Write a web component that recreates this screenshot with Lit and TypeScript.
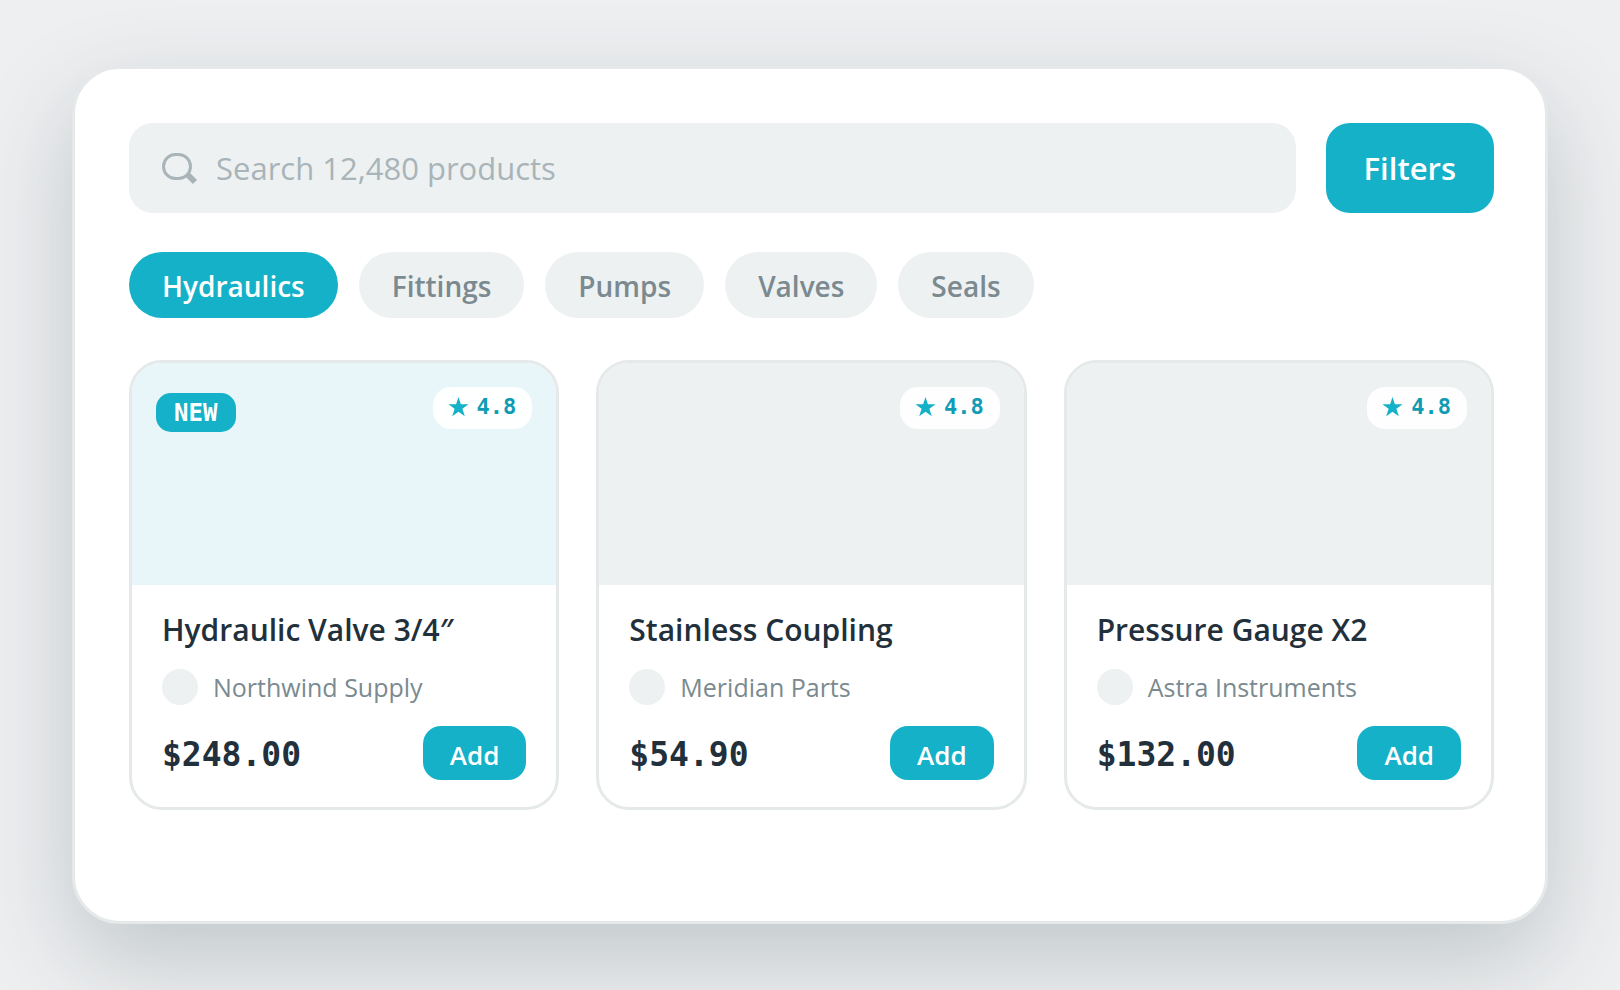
import { LitElement, html, css, svg } from "lit";
import { customElement, property, state } from "lit/decorators.js";
import { classMap } from "lit/directives/class-map.js";

interface Product {
  name: string;
  vendor: string;
  price: string;
  rating: string;
  fresh?: boolean;
}

const CATEGORIES = ["Hydraulics", "Fittings", "Pumps", "Valves", "Seals"];

const PRODUCTS: Product[] = [
  { name: "Hydraulic Valve 3/4″", vendor: "Northwind Supply", price: "$248.00", rating: "4.8", fresh: true },
  { name: "Stainless Coupling", vendor: "Meridian Parts", price: "$54.90", rating: "4.8" },
  { name: "Pressure Gauge X2", vendor: "Astra Instruments", price: "$132.00", rating: "4.8" },
];

const star = svg`<path fill="currentColor" d="M10.5 0 L12.9 7.2 L20.6 7.2 L14.4 11.8 L16.8 19.2 L10.5 14.7 L4.2 19.2 L6.6 11.8 L0.4 7.2 L8.1 7.2 Z"/>`;

@customElement("product-card")
export class ProductCard extends LitElement {
  @property({ attribute: false }) product!: Product;

  static styles = css`
    :host {
      display: block;
      min-width: 0;
    }
    .card {
      border: 3px solid #e5e9e9;
      border-radius: 33px;
      overflow: hidden;
      background: #fff;
    }
    .media {
      position: relative;
      height: 222px;
      background: #edf1f2;
    }
    .media.fresh {
      background: #e8f6fa;
    }
    .new {
      position: absolute;
      top: 30px;
      left: 24px;
      height: 39px;
      padding: 1px 19px 0 18px;
      box-sizing: border-box;
      border-radius: 15px;
      background: #14b1c8;
      color: #fff;
      font: 700 24px/39px "DejaVu Sans Mono", monospace;
    }
    .rating {
      position: absolute;
      top: 24px;
      right: 24px;
      display: flex;
      align-items: center;
      gap: 8px;
      height: 42px;
      padding: 0 16px 3px 15px;
      border-radius: 18px;
      background: rgba(255, 255, 255, 0.92);
      color: #0e9bb3;
      font: 700 22px/39px "DejaVu Sans Mono", monospace;
      box-sizing: border-box;
    }
    .star {
      display: block;
      width: 21px;
      height: 20px;
      color: #14b1c8;
    }
    .body {
      padding: 24px 30px 27px;
    }
    .name {
      margin: 0;
      font-size: 30px;
      line-height: 42px;
      font-weight: 600;
      color: #22303c;
      white-space: nowrap;
    }
    .vendor {
      display: flex;
      align-items: center;
      gap: 15px;
      margin-top: 18px;
      color: #7a8a90;
      font-size: 25px;
      line-height: 36px;
      white-space: nowrap;
    }
    .avatar {
      flex: none;
      width: 36px;
      height: 36px;
      border-radius: 50%;
      background: #edf1f2;
    }
    .buy {
      display: flex;
      align-items: center;
      justify-content: space-between;
      margin-top: 21px;
    }
    .price {
      padding-top: 3px;
      color: #22303c;
      font: 700 33px/51px "DejaVu Sans Mono", monospace;
    }
    .add {
      height: 54px;
      padding: 3px 27px 0;
      border: 0;
      border-radius: 18px;
      background: #14b1c8;
      color: #fff;
      font: 600 26px "Open Sans", "Noto Sans", sans-serif;
      cursor: pointer;
    }
  `;

  render() {
    const p = this.product;
    return html`
      <article class="card">
        <div class=${classMap({ media: true, fresh: !!p.fresh })}>
          ${p.fresh ? html`<span class="new">NEW</span>` : null}
          <span class="rating">
            <svg class="star" viewBox="0 0 21 20" aria-hidden="true">${star}</svg>
            ${p.rating}
          </span>
        </div>
        <div class="body">
          <h2 class="name">${p.name}</h2>
          <div class="vendor"><span class="avatar"></span>${p.vendor}</div>
          <div class="buy">
            <span class="price">${p.price}</span>
            <button class="add" type="button">Add</button>
          </div>
        </div>
      </article>
    `;
  }
}

@customElement("app-root")
export class AppRoot extends LitElement {
  @state() private active = "Hydraulics";

  static styles = css`
    :host {
      display: flex;
      box-sizing: border-box;
      min-height: 100vh;
      padding: 66px 72px;
      background: #eeeff1;
      font-family: "Open Sans", "Noto Sans", sans-serif;
    }
    .panel {
      flex: 1;
      min-width: 0;
      box-sizing: border-box;
      padding: 54px 51px 54px 54px;
      border: 3px solid #e5e9e9;
      border-radius: 48px;
      background: #fff;
      box-shadow: 0 36px 96px rgba(25, 50, 56, 0.21);
    }
    .bar {
      display: flex;
      gap: 30px;
    }
    .search {
      flex: 1;
      min-width: 0;
      display: flex;
      align-items: center;
      gap: 18px;
      height: 90px;
      padding: 0 33px;
      box-sizing: border-box;
      border-radius: 24px;
      background: #edf1f2;
    }
    .glass {
      flex: none;
      width: 36px;
      height: 30px;
      overflow: visible;
      color: #a9b4b9;
    }
    .field {
      flex: 1;
      min-width: 0;
      height: 90px;
      padding: 0;
      border: 0;
      outline: 0;
      background: none;
      color: #22303c;
      font: 400 31px "Open Sans", "Noto Sans", sans-serif;
    }
    .field::placeholder {
      color: #a9b4b9;
      opacity: 1;
    }
    .filters {
      padding: 0 38px;
      border: 0;
      border-radius: 24px;
      background: #14b1c8;
      color: #fff;
      font: 600 31px "Open Sans", "Noto Sans", sans-serif;
      cursor: pointer;
    }
    .chips {
      display: flex;
      flex-wrap: wrap;
      gap: 21px;
      margin-top: 39px;
    }
    .chip {
      height: 66px;
      padding: 2px 33px 0;
      border: 0;
      border-radius: 33px;
      background: #edf1f2;
      color: #7a8a90;
      font: 600 28px "Open Sans", "Noto Sans", sans-serif;
      cursor: pointer;
    }
    .chip.on {
      background: #14b1c8;
      color: #fff;
    }
    .grid {
      display: grid;
      grid-template-columns: repeat(3, 1fr);
      gap: 37px;
      margin-top: 42px;
    }
  `;

  render() {
    return html`
      <main class="panel">
        <div class="bar">
          <label class="search">
            <svg class="glass" viewBox="0 0 36 30" aria-hidden="true">
              <rect x="1.5" y="1.5" width="27" height="24" rx="12" fill="none" stroke="currentColor" stroke-width="3" />
              <path d="M25 21 L33 29" stroke="currentColor" stroke-width="6" />
            </svg>
            <input class="field" type="text" aria-label="Search products" placeholder="Search 12,480 products" />
          </label>
          <button class="filters" type="button">Filters</button>
        </div>
        <nav class="chips" aria-label="Categories">
          ${CATEGORIES.map(
            (c) => html`<button
              type="button"
              class=${classMap({ chip: true, on: c === this.active })}
              @click=${() => (this.active = c)}
            >${c}</button>`
          )}
        </nav>
        <section class="grid">
          ${PRODUCTS.map((p) => html`<product-card .product=${p}></product-card>`)}
        </section>
      </main>
    `;
  }
}
